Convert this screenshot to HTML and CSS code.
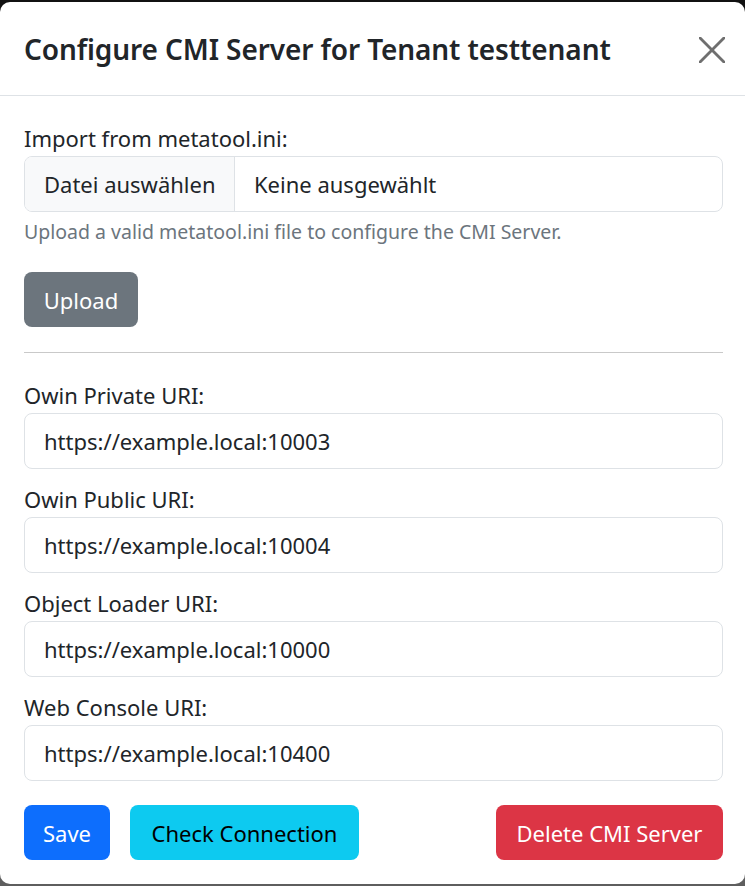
FILE: index.html
```html
<!DOCTYPE html>
<html lang="de">
<head>
<meta charset="utf-8">
<title>Configure CMI Server</title>
<link rel="stylesheet" href="styles.css">
</head>
<body>
<div class="modal">
  <div class="modal-header">
    <h5 class="modal-title">Configure CMI Server for Tenant testtenant</h5>
    <button class="btn-close" aria-label="Close">
      <svg viewBox="0 0 24 24" width="26" height="26"><path d="M1 1L23 23M23 1L1 23" stroke="#6f6f6f" stroke-width="2.6" stroke-linecap="round" fill="none"/></svg>
    </button>
  </div>
  <div class="modal-body">
    <div class="group">
      <label class="form-label">Import from metatool.ini:</label>
      <div class="file-input">
        <span class="file-btn">Datei auswählen</span>
        <span class="file-name">Keine ausgewählt</span>
      </div>
      <div class="form-text">Upload a valid metatool.ini file to configure the CMI Server.</div>
    </div>
    <button class="btn btn-secondary upload">Upload</button>
    <hr class="sep">
    <div class="group">
      <label class="form-label">Owin Private URI:</label>
      <div class="form-control">https://example.local:10003</div>
    </div>
    <div class="group">
      <label class="form-label">Owin Public URI:</label>
      <div class="form-control">https://example.local:10004</div>
    </div>
    <div class="group">
      <label class="form-label">Object Loader URI:</label>
      <div class="form-control">https://example.local:10000</div>
    </div>
    <div class="group last">
      <label class="form-label">Web Console URI:</label>
      <div class="form-control">https://example.local:10400</div>
    </div>
    <div class="actions">
      <button class="btn btn-primary">Save</button>
      <button class="btn btn-info">Check Connection</button>
      <span class="spacer"></span>
      <button class="btn btn-danger">Delete CMI Server</button>
    </div>
  </div>
</div>
</body>
</html>
```
FILE: styles.css
```css
html, body {
  margin: 0;
  padding: 0;
  height: 886px;
  overflow: hidden;
}
body {
  background: linear-gradient(to bottom, #111111 0, #111111 50%, #5e5e5e 50%, #5e5e5e 100%);
  font-family: "Noto Sans", "Open Sans", sans-serif;
  color: #212529;
  padding-top: 2px;
  box-sizing: border-box;
}
.modal {
  background: #fff;
  border-radius: 10px;
  height: 882px;
  display: flex;
  flex-direction: column;
  overflow: hidden;
}
.modal-header {
  height: 93px;
  border-bottom: 1px solid #dee2e6;
  display: flex;
  align-items: center;
  justify-content: space-between;
  padding: 0 20px 0 24px;
  box-sizing: content-box;
}
.modal-title {
  margin: 0;
  font-size: 28px;
  font-weight: 600;
  line-height: 1.5;
  color: #212529;
  letter-spacing: -0.1px;
}
.btn-close {
  border: 0;
  background: none;
  padding: 0;
  width: 26px;
  height: 26px;
  display: flex;
  margin-top: 2px;
}
.modal-body {
  padding: 24px 22px 0 24px;
  display: flex;
  flex-direction: column;
}
.form-label {
  display: block;
  font-size: 22px;
  line-height: 30px;
  height: 30px;
  padding-top: 3px;
  margin-bottom: 3px;
}
.group {
  margin-bottom: 12px;
}
.group.last {
  margin-bottom: 24px;
}
.file-input {
  display: flex;
  height: 56px;
  border: 1px solid #dee2e6;
  border-radius: 8px;
  box-sizing: border-box;
  overflow: hidden;
  font-size: 22px;
}
.file-btn {
  background: #f8f9fa;
  border-right: 1px solid #dee2e6;
  padding: 0 19px;
  width: 210px;
  box-sizing: border-box;
  display: flex;
  align-items: center;
  white-space: nowrap;
}
.file-name {
  display: flex;
  align-items: center;
  padding-left: 19px;
}
.form-text {
  margin-top: 7px;
  font-size: 19.5px;
  line-height: 26px;
  color: #6c757d;
}
.group:first-child {
  margin-bottom: 27px;
}
.form-control {
  height: 56px;
  border: 1px solid #dee2e6;
  border-radius: 8px;
  box-sizing: border-box;
  padding: 0 19px;
  display: flex;
  align-items: center;
  font-size: 22px;
}
.btn {
  font-family: inherit;
  font-size: 22px;
  height: 55px;
  border: 0;
  border-radius: 8px;
  padding: 0 10px;
  line-height: 1;
  white-space: nowrap;
}
.btn-secondary {
  background: #6c757d;
  color: #fff;
}
.upload {
  width: 114px;
  align-self: flex-start;
}
.sep {
  border: 0;
  border-top: 1px solid #c9c9c9;
  margin: 25px 0 24px;
}
.actions {
  display: flex;
  gap: 20px;
}
.spacer {
  flex: 1;
}
.btn-primary {
  background: #0d6efd;
  color: #fff;
  width: 86px;
}
.btn-info {
  background: #0dcaf0;
  color: #000;
  width: 229px;
}
.btn-danger {
  background: #dc3545;
  color: #fff;
  width: 227px;
}
```
